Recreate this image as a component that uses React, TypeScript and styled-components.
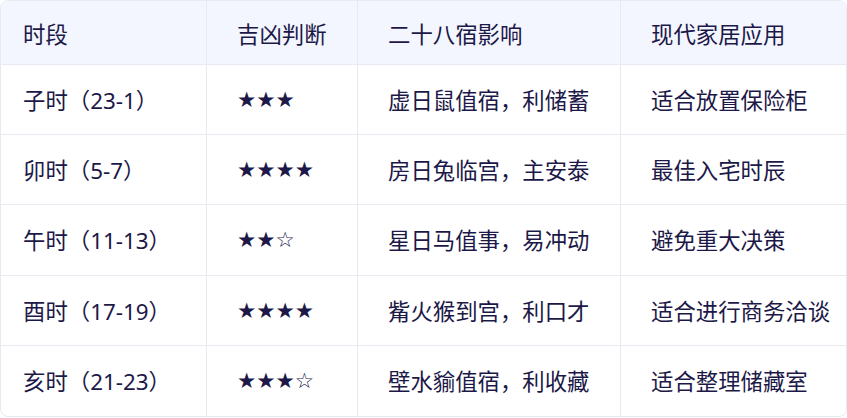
import React from "react";
import styled, { createGlobalStyle } from "styled-components";

const textColor = "#1c1848";
const lineColor = "#e8eaf1";

const GlobalStyle = createGlobalStyle`
    body {
        margin: 0;
        background: #ffffff;
        font-family: "Noto Sans", "Noto Sans CJK SC", sans-serif;
    }
`;

const TableWrapper = styled.div`
    border: 1px solid ${lineColor};
    border-radius: 8px;
    overflow: hidden;
    display: grid;
    grid-template-columns: 206px 151px 263px 1fr;
`;

const HeadCell = styled.div<{ $first?: boolean; $last?: boolean }>`
    box-sizing: border-box;
    height: 64px;
    display: flex;
    align-items: center;
    padding-left: ${(p) => (p.$first ? "22px" : "30px")};
    background: #f3f6fe;
    border-bottom: 1px solid ${lineColor};
    border-right: ${(p) => (p.$last ? "none" : `1px solid ${lineColor}`)};
    color: ${textColor};
    font-family: "Noto Sans CJK SC", sans-serif;
    font-size: 22.4px;
    white-space: nowrap;
`;

const Cell = styled.div<{ $first?: boolean; $last?: boolean; $bottom?: boolean; $stars?: boolean }>`
    box-sizing: border-box;
    height: 70.2px;
    display: flex;
    align-items: center;
    padding-left: ${(p) => (p.$first ? "22px" : "30px")};
    border-bottom: ${(p) => (p.$bottom ? "none" : `1px solid ${lineColor}`)};
    border-right: ${(p) => (p.$last ? "none" : `1px solid ${lineColor}`)};
    color: ${textColor};
    font-family: ${(p) =>
        p.$stars ? `"DejaVu Sans", sans-serif` : `"Noto Sans", "Noto Sans CJK SC", sans-serif`};
    font-size: ${(p) => (p.$stars ? "21.5px" : "22.4px")};
    white-space: nowrap;
`;

const headers = ["时段", "吉凶判断", "二十八宿影响", "现代家居应用"];

const rows = [
    ["子时（23-1）", "★★★", "虚日鼠值宿，利储蓄", "适合放置保险柜"],
    ["卯时（5-7）", "★★★★", "房日兔临宫，主安泰", "最佳入宅时辰"],
    ["午时（11-13）", "★★☆", "星日马值事，易冲动", "避免重大决策"],
    ["酉时（17-19）", "★★★★", "觜火猴到宫，利口才", "适合进行商务洽谈"],
    ["亥时（21-23）", "★★★☆", "壁水貐值宿，利收藏", "适合整理储藏室"],
];

const App: React.FC = () => {
    return (
        <>
            <GlobalStyle />
            <TableWrapper>
                {headers.map((h, i) => (
                    <HeadCell key={h} $first={i === 0} $last={i === headers.length - 1}>
                        {h}
                    </HeadCell>
                ))}
                {rows.map((row, r) =>
                    row.map((text, c) => (
                        <Cell
                            key={`${r}-${c}`}
                            $first={c === 0}
                            $last={c === row.length - 1}
                            $bottom={r === rows.length - 1}
                            $stars={c === 1}
                        >
                            {text}
                        </Cell>
                    ))
                )}
            </TableWrapper>
        </>
    );
};

export default App;
